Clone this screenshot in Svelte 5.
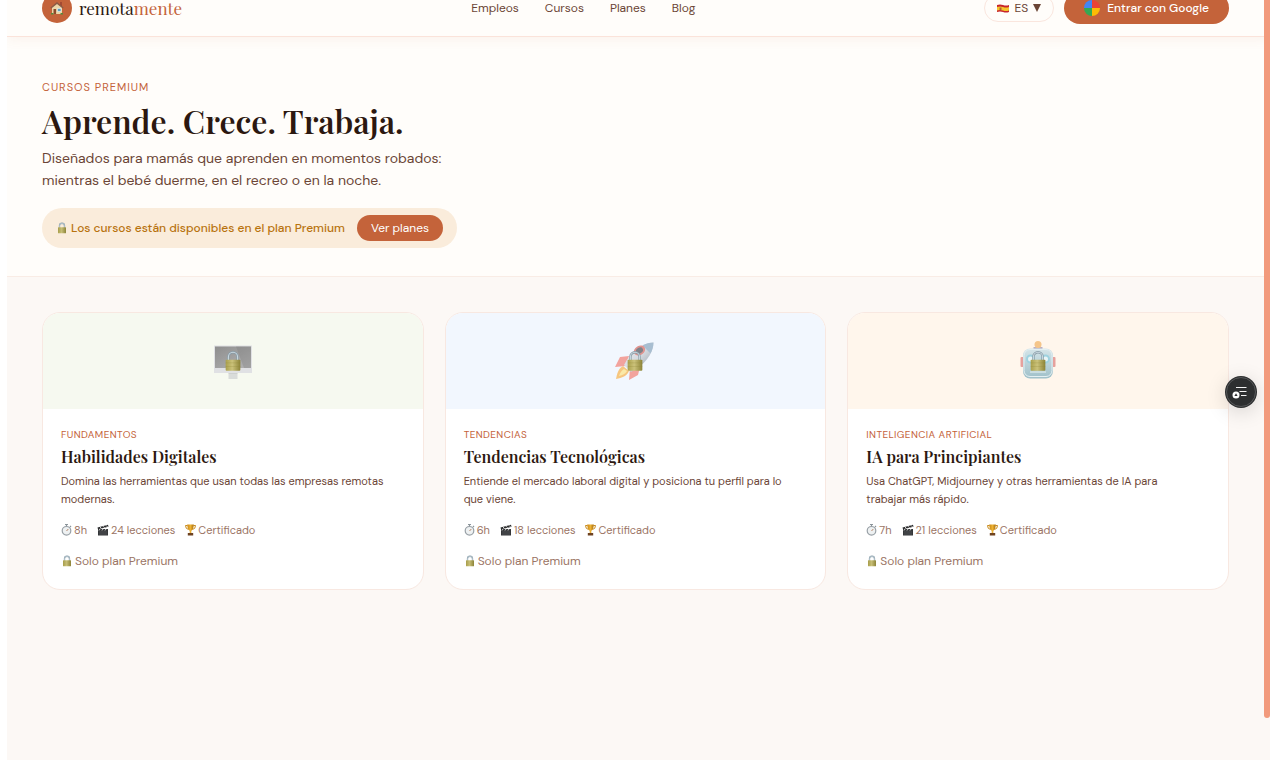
<script>
  const links = ['Empleos', 'Cursos', 'Planes', 'Blog'];
  const courses = [
    { art: 'computer', tag: 'Fundamentos', title: 'Habilidades Digitales', text: 'Domina las herramientas que usan todas las empresas remotas modernas.', hours: '8h', lessons: '24 lecciones' },
    { art: 'rocket', tag: 'Tendencias', title: 'Tendencias Tecnológicas', text: 'Entiende el mercado laboral digital y posiciona tu perfil para lo que viene.', hours: '6h', lessons: '18 lecciones' },
    { art: 'robot', tag: 'Inteligencia artificial', title: 'IA para Principiantes', text: 'Usa ChatGPT, Midjourney y otras herramientas de IA para trabajar más rápido.', hours: '7h', lessons: '21 lecciones' }
  ];
</script>

{#snippet lock(size)}
  <svg width={size} height={size} viewBox="0 0 24 24" aria-hidden="true">
    <path d="M7 12V7.5a5 5 0 0 1 10 0V12" fill="none" stroke="#8a9da8" stroke-width="2.6" />
    <path d="M7 12V7.5a5 5 0 0 1 10 0V12" fill="none" stroke="#c9d8e0" stroke-width="1.2" />
    <rect x="4" y="10.5" width="16" height="12" rx="1" fill="url(#brass)" />
    <path d="M4 14h16M4 18h16" stroke="#8f8638" stroke-width=".5" opacity=".5" />
  </svg>
{/snippet}

<svg class="defs" width="0" height="0" aria-hidden="true">
  <defs>
    <linearGradient id="brass"><stop offset="0" stop-color="#aaa04c" /><stop offset=".45" stop-color="#cbc27a" /><stop offset="1" stop-color="#8d8438" /></linearGradient>
    <linearGradient id="screen" x2="1" y2="1"><stop offset="0" stop-color="#8e8e8e" /><stop offset="1" stop-color="#b4b4b4" /></linearGradient>
    <linearGradient id="hull" x2="1" y2="1"><stop offset="0" stop-color="#f4f4f6" /><stop offset=".5" stop-color="#d5dae0" /><stop offset="1" stop-color="#8e9aa6" /></linearGradient>
    <linearGradient id="face" x2="0" y2="1"><stop offset="0" stop-color="#d5e5e9" /><stop offset="1" stop-color="#9fc0c9" /></linearGradient>
    <linearGradient id="gold"><stop offset="0" stop-color="#c98610" /><stop offset=".5" stop-color="#edb235" /><stop offset="1" stop-color="#a86c05" /></linearGradient>
  </defs>
</svg>

<div class="page">
  <header>
    <a class="brand" href="#inicio">
      <span class="mark">
        <svg width="14" height="14" viewBox="0 0 14 14" aria-hidden="true">
          <path d="M10 1h2v4h-2z" fill="#a44a32" />
          <path d="M2 6l5-4 5 4v7H2z" fill="#ecd6a8" />
          <path d="M.4 6.6L7 .9l6.600 5.700-.9 1L7 2.900 1.300 7.600z" fill="#8c5a44" />
          <path d="M3.500 8h2.600v5H3.500z" fill="#8c4a2c" />
          <path d="M7.500 7.500H11v3H7.500z" fill="#5a9fc0" stroke="#fff" stroke-width=".5" />
          <path d="M1 12h2.500v1.500H1zM10.500 12H13v1.500h-2.500z" fill="#55893c" />
        </svg>
      </span>
      <span class="word">remota<span>mente</span></span>
    </a>
    <nav>
      {#each links as link}<a href="#{link.toLowerCase()}">{link}</a>{/each}
    </nav>
    <div class="actions">
      <button class="lang">
        <svg width="12" height="9" viewBox="0 0 12 9" aria-hidden="true">
          <path d="M0 1q3-1 6 0t6 0v7q-3 1-6 0t-6 0z" fill="#c8252c" />
          <path d="M0 3q3-1 6 0t6 0v3.500q-3 1-6 0t-6 0z" fill="#f5c52c" />
          <path d="M2.500 3.500h2v2.500h-2z" fill="#b5622c" />
        </svg>
        ES
        <svg width="8" height="8" viewBox="0 0 8 8" aria-hidden="true"><path d="M0 0h8L4 8z" fill="#6b4536" /></svg>
      </button>
      <button class="login">
        <svg width="16" height="16" viewBox="0 0 16 16" aria-hidden="true">
          <path d="M8 8V0a8 8 0 0 1 8 8z" fill="#ea4335" />
          <path d="M8 8h8a8 8 0 0 1-8 8z" fill="#fbbc05" />
          <path d="M8 8v8a8 8 0 0 1-8-8z" fill="#34a853" />
          <path d="M8 8H0a8 8 0 0 1 8-8z" fill="#4285f4" />
        </svg>
        Entrar con Google
      </button>
    </div>
  </header>

  <section class="hero">
    <p class="eyebrow">Cursos premium</p>
    <h1>Aprende. Crece. Trabaja.</h1>
    <p class="lead">Diseñados para mamás que aprenden en momentos robados:<br />mientras el bebé duerme, en el recreo o en la noche.</p>
    <div class="notice">
      <span class="note">{@render lock(12)}Los cursos están disponibles en el plan Premium</span>
      <button>Ver planes</button>
    </div>
  </section>

  <main>
    {#each courses as c}
      <article>
        <div class="cover {c.art}">
          <svg width="40" height="40" viewBox="0 0 40 40" aria-hidden="true">
            {#if c.art === 'computer'}
              <path d="M15.500 30h9v8h-9z" fill="#d9dcda" />
              <path d="M15.500 30h9v2.500h-9z" fill="#c3c6c4" />
              <path d="M1 4.500h38v27.500H1z" fill="#e0e1e4" />
              <path d="M2 5.500h36v21.500H2z" fill="url(#screen)" />
              <path d="M23 5.500h15v21.500h-7z" fill="#777" opacity=".3" />
            {:else if c.art === 'rocket'}
              <path d="M14 15L5 16 0 26l11-1zM25 26l-2 8-9 5 1-12z" fill="#f2a39d" />
              <path d="M8 25c-5 3-6 8-7 13 6-1 11-3 13-8z" fill="#f6c680" />
              <path d="M9 28c-3 2-4 4-5 7 4-1 6-2 8-5z" fill="#fae9a8" />
              <path d="M38.500 1.500C27 2 16 10 9 24l7 7c13-7 22-17 22.500-29.500z" fill="url(#hull)" />
              <path d="M38.500 1.500c-4 0-8 1-11 3l8 8c2-4 3-7 3-11z" fill="#a8bed1" />
              <ellipse cx="24.500" cy="9.500" rx="6" ry="4.500" transform="rotate(-30 24.500 9.500)" fill="#df938f" />
              <ellipse cx="24.500" cy="9.500" rx="3.700" ry="2.800" transform="rotate(-30 24.500 9.500)" fill="#7f8289" />
            {:else}
              <path d="M15.500 6h9v4h-9z" fill="#b9afc3" />
              <circle cx="20" cy="3.600" r="3.500" fill="#f5c58a" />
              <rect x="2.500" y="16" width="35" height="10" rx="1" fill="#e6a19d" />
              <rect x="5" y="7.500" width="30" height="30" rx="7" fill="url(#face)" />
              <rect x="6" y="8.500" width="28" height="27" rx="6" fill="none" stroke="#e3eff2" stroke-width="1" />
              <circle cx="12.500" cy="18" r="3.500" fill="#e8f4f6" stroke="#9ed2e0" stroke-width="2" />
              <circle cx="27.500" cy="18" r="3.500" fill="#e8f4f6" stroke="#9ed2e0" stroke-width="2" />
              <path d="M12 31h16" stroke="#c9dde1" stroke-width="2" />
            {/if}
          </svg>
          <span class="veil">{@render lock(22)}</span>
        </div>
        <div class="body">
          <p class="tag">{c.tag}</p>
          <h2>{c.title}</h2>
          <p class="text">{c.text}</p>
          <ul>
            <li>
              <svg width="11" height="12" viewBox="0 0 11 12" aria-hidden="true">
                <path d="M4 .5h3M5.500.5v2M9 2l1 1" stroke="#8b949a" stroke-width="1.200" />
                <circle cx="5.500" cy="6.800" r="4.300" fill="#eef1f2" stroke="#98a0a6" stroke-width="1.200" />
                <path d="M5.500 7l1.800-2" stroke="#b07a5a" stroke-width=".9" />
              </svg>{c.hours}
            </li>
            <li>
              <svg width="12" height="12" viewBox="0 0 12 12" aria-hidden="true">
                <path d="M1 5h10v6.500H1z" fill="#343638" />
                <path d="M.5 3.500L11 .8l.5 2L1 5.300z" fill="#2c2d2e" />
                <path d="M3 3l1.500 1.500M6 2.200l1.500 1.500M9 1.400l1.500 1.500M3 5l-1 1.500M6 5L5 6.500M9 5L8 6.500" stroke="#e7e7e7" stroke-width=".9" />
                <path d="M2 8h8M2 10h8" stroke="#6a6d70" stroke-width=".5" />
              </svg>{c.lessons}
            </li>
            <li>
              <svg width="11" height="12" viewBox="0 0 11 12" aria-hidden="true">
                <path d="M2.500 1.500h-2q0 3.500 3 4M8.500 1.500h2q0 3.500-3 4" fill="none" stroke="#c98a1a" />
                <path d="M2.200.5h6.600Q8.500 6 6.300 6.800V9H4.700V6.800Q2.500 6 2.200.5z" fill="url(#gold)" />
                <path d="M2.800 9h5.400v2.500H2.800z" fill="#6f4320" />
              </svg>Certificado
            </li>
          </ul>
          <p class="locked">{@render lock(12)}Solo plan Premium</p>
        </div>
      </article>
    {/each}
  </main>
</div>

<button class="float" aria-label="Abrir panel">
  <svg width="32" height="32" viewBox="0 0 32 32" aria-hidden="true">
    <circle cx="16" cy="16" r="14.500" fill="none" stroke="#67696a" stroke-width=".7" />
    <path d="M11 11.500h10.500M14.500 15.500h7M16 19.500h5.500" stroke="#f4f4f4" stroke-width="1" />
    <circle cx="11" cy="19" r="3.500" fill="#fff" />
    <path d="M11 17.300l1.600 2.700H9.400z" fill="#2d2f30" />
  </svg>
</button>
<div class="thumb"></div>

<style>
  :global(body) { background: #fff; overflow: hidden; }
  .defs { position: absolute; }
  .page {
    --clay: #c4633a; --ink: #2c1810; --brown: #6b4536; --muted: #9b7565; --line: #fae6de;
    overflow: clip; min-height: calc(100vh + 20px); margin: -20px 0 0 7px;
    background: #fcf8f5; color: var(--brown);
    font-family: "DM Sans", Inter, sans-serif; font-size: 12px;
  }
  * { box-sizing: border-box; }
  p, h1, h2, ul { margin: 0; padding: 0; }
  h1, h2, .word { font-family: "Playfair Display", "Liberation Serif", serif; color: var(--ink); }
  a { color: inherit; text-decoration: none; }
  button { border: 0; font: inherit; cursor: pointer; }
  svg { flex: none; }
  header {
    position: relative; display: flex; justify-content: space-between; align-items: center;
    height: 57px; padding: 0 41px 0 35px; background: #fffdfa;
    border-bottom: 1px solid #fbe3da; box-shadow: 0 2px 12px rgba(196, 99, 58, .08);
  }
  .brand, nav, .actions, .lang, .login { display: flex; align-items: center; }
  .brand { gap: 7px; }
  .mark { display: grid; place-items: center; width: 30px; height: 30px; border-radius: 50%; background: var(--clay); }
  .word { font-size: 17px; line-height: 20px; font-weight: 400; }
  .word span { color: var(--clay); }
  nav { gap: 26px; }
  .actions { gap: 10px; }
  .lang { height: 28px; gap: 5px; padding: 0 12px; border: 1px solid var(--line); border-radius: 14px; background: transparent; color: var(--brown); }
  .login { height: 32px; gap: 7px; padding: 0 20px; border-radius: 16px; background: var(--clay); color: #fff; font-weight: 500; }
  .hero { padding: 43px 41px 28px 35px; background: #fffdfa; border-bottom: 1px solid #f9ece5; }
  .eyebrow { font-size: 11px; line-height: 14px; letter-spacing: 1px; text-transform: uppercase; color: var(--clay); }
  h1 { margin-top: 7px; font-size: 32px; line-height: 40px; font-weight: 600; }
  .lead { margin-top: 6px; font-size: 14px; line-height: 22px; }
  .notice { display: inline-flex; align-items: center; gap: 12px; margin-top: 17px; padding: 7px 14px; border-radius: 20px; background: #faecdb; color: #b8730f; font-weight: 500; vertical-align: top; }
  .note { display: flex; align-items: center; gap: 3px; }
  .notice button { height: 26px; padding: 0 14px; border-radius: 13px; background: var(--clay); color: #fff; font-weight: 400; }
  main { display: grid; grid-template-columns: repeat(3, 1fr); gap: 21px; padding: 35px 41px 35px 35px; }
  article { overflow: hidden; border: 1px solid #f8e8e1; border-radius: 18px; background: #fff; }
  .cover { position: relative; display: grid; place-items: center; height: 96px; }
  .computer { background: #f6f9f0; }
  .rocket { background: #f2f7fe; }
  .robot { background: #fff6ec; }
  .veil { position: absolute; inset: 0; display: grid; place-items: center; }
  .body { padding: 19px 18px 20px; }
  .tag { font-size: 10px; line-height: 14px; letter-spacing: .04em; text-transform: uppercase; color: var(--clay); }
  h2 { margin-top: 4px; font-size: 16px; line-height: 22px; font-weight: 600; }
  .text { margin-top: 4px; padding-right: 14px; font-size: 11px; line-height: 18px; }
  ul { display: flex; gap: 10px; margin-top: 14px; list-style: none; font-size: 11px; line-height: 16px; color: var(--muted); }
  li, .locked { display: flex; align-items: center; gap: 2px; }
  .locked { margin-top: 15px; line-height: 16px; color: var(--muted); }
  .float { position: fixed; right: 13px; top: 376px; width: 32px; height: 32px; padding: 0; border-radius: 50%; background: #2d2f30; box-shadow: 0 4px 20px rgba(0, 0, 0, .15); }
  .thumb { position: fixed; top: 0; right: 0; width: 6px; height: 718px; border-radius: 0 0 3px 3px; background: #f29a7c; }
</style>
